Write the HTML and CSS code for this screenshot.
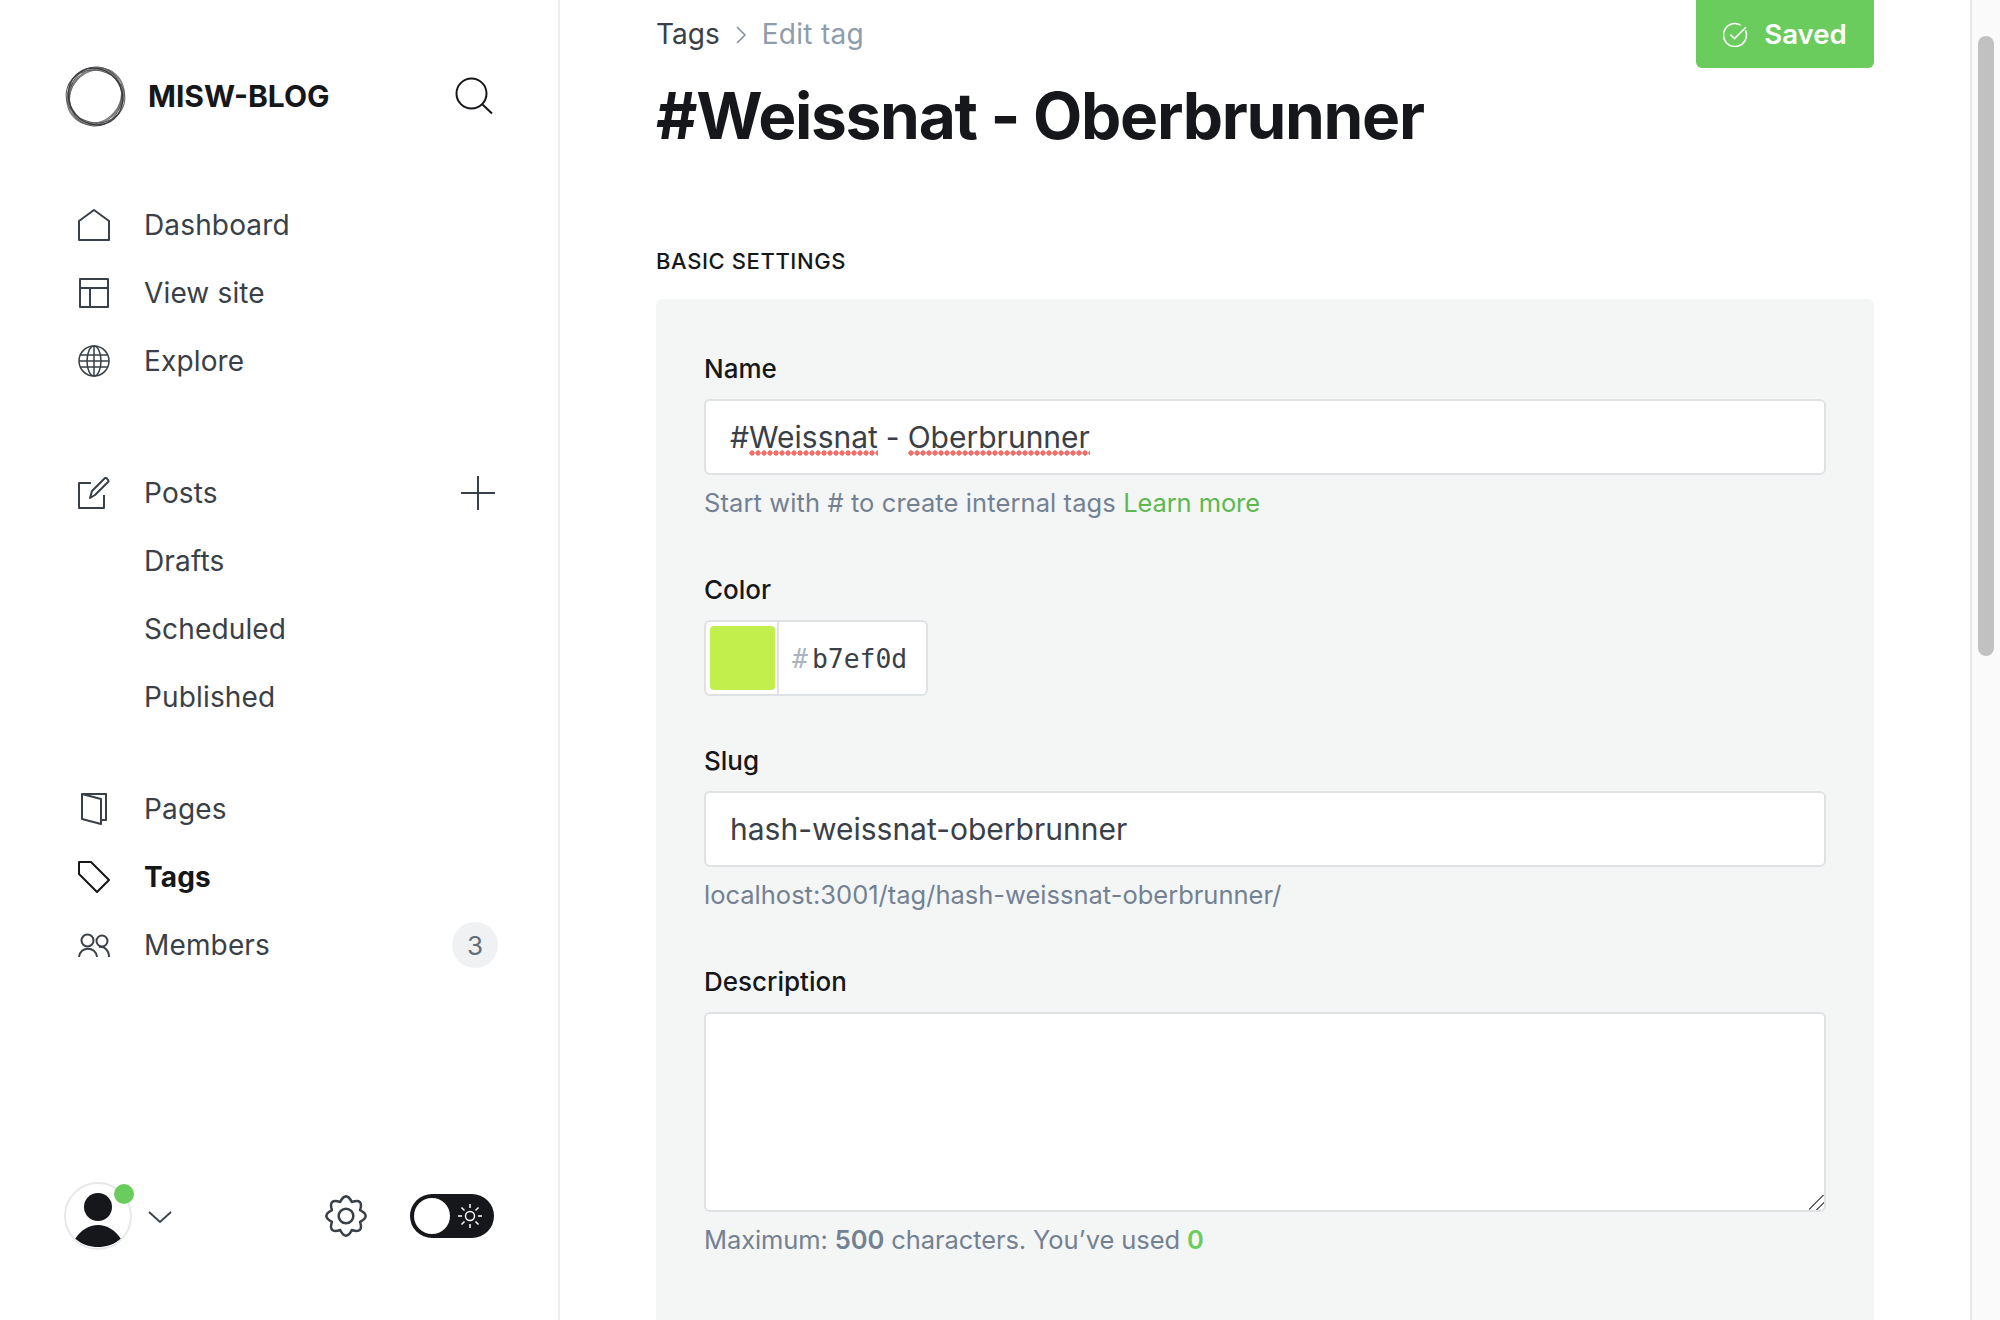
FILE: index.html
```html
<!DOCTYPE html>
<html>
<head>
    <meta charset="UTF-8">
    <title>Edit tag</title>
    <link rel="stylesheet" href="styles.css">
</head>
<body>
<aside class="sidebar">
    <div class="brand">
        <svg class="logo" viewBox="0 0 62 62" fill="none" stroke="#3a3c40" stroke-width="1">
            <ellipse cx="31" cy="31" rx="30.500" ry="25" stroke="#666" transform="rotate(-50 31 31)"/>
            <ellipse cx="31" cy="31" rx="30.500" ry="25.500" stroke="#777" transform="rotate(-38 31 31)"/>
            <ellipse cx="31" cy="31" rx="30" ry="26" stroke="#888" transform="rotate(-25 31 31)"/>
            <ellipse cx="31" cy="31" rx="30" ry="25.500" stroke="#777" transform="rotate(-65 31 31)"/>
            <ellipse cx="31" cy="31" rx="30" ry="26.500" stroke="#555" transform="rotate(15 31 31)"/>
            <ellipse cx="31" cy="31" rx="30" ry="26.500" stroke="#555" transform="rotate(95 31 31)"/>
            <ellipse cx="31" cy="31" rx="29.500" ry="27" stroke-width="1.500" transform="rotate(60 31 31)"/>
        </svg>
        <span class="brand-name">MISW-BLOG</span>
        <svg class="search" viewBox="0 0 38 38" fill="none" stroke="#15171a" stroke-width="2">
            <circle cx="16.500" cy="16.500" r="15"/>
            <path d="M27.500 27.500 L37 36.500"/>
        </svg>
    </div>

    <nav class="nav-group">
        <a class="nav-item">
            <svg class="nav-icon" viewBox="0 0 32 32"><path d="M1 31V12L16 1l15 11v19z"/></svg>
            Dashboard
        </a>
        <a class="nav-item">
            <svg class="nav-icon" viewBox="0 0 32 32"><path d="M2 2h28v28H2z M2 11h28 M12 11v19"/></svg>
            View site
        </a>
        <a class="nav-item">
            <svg class="nav-icon thin" viewBox="0 0 32 32"><circle cx="16" cy="16" r="15"/><ellipse cx="16" cy="16" rx="7" ry="15"/><path d="M16 1v30 M2.500 10h27 M1 16h30 M2.500 22h27"/></svg>
            Explore
        </a>
    </nav>

    <nav class="nav-group nav-group-posts">
        <a class="nav-item">
            <svg class="nav-icon" viewBox="0 0 32 32"><path d="M13 6H1v25h25V18 M12 21l2-7L27 1c1-.7 3.500 1.500 3.500 3.500L17 18z"/></svg>
            Posts
            <svg class="plus" viewBox="0 0 34 34"><path d="M17 0v34 M0 17h34"/></svg>
        </a>
        <a class="nav-item">Drafts</a>
        <a class="nav-item">Scheduled</a>
        <a class="nav-item">Published</a>
    </nav>

    <nav class="nav-group">
        <a class="nav-item">
            <svg class="nav-icon" viewBox="0 0 32 32"><path d="M4 1h24v26h-5 M4 1v25l19 5V6z"/></svg>
            Pages
        </a>
        <a class="nav-item active">
            <svg class="nav-icon" viewBox="0 0 32 32"><path d="M1 1h12l18 18-12 12L1 13z"/></svg>
            Tags
        </a>
        <a class="nav-item">
            <svg class="nav-icon" viewBox="0 0 32 32"><circle cx="9.500" cy="11.500" r="6"/><circle cx="24" cy="12" r="5.500"/><path d="M1 28c1-11 17-11 18 0 M21 18c5-1 10 3 10 10"/></svg>
            Members
            <span class="badge">3</span>
        </a>
    </nav>

    <div class="sidebar-footer">
        <div class="avatar">
            <svg viewBox="0 0 64 64"><circle cx="32" cy="23" r="14" fill="#15171a"/><path d="M9 55C15 46 23 41 32 41s17 5 23 14C47 61 40 63 32 63s-15-2-23-8z" fill="#15171a"/></svg>
            <span class="status-dot"></span>
        </div>
        <svg class="chevron" viewBox="0 0 24 12" fill="none" stroke="#394047" stroke-width="1.800"><path d="M1 1l11 10L23 1"/></svg>
        <svg class="gear" viewBox="0 0 40 40" fill="none" stroke="#394047" stroke-width="2.400">
            <circle cx="20" cy="20" r="7"/>
            <path d="M33.400 25.550Q37 37 25.550 33.400Q20 44 14.450 33.400Q3 37 6.600 25.550Q-4 20 6.600 14.450Q3 3 14.450 6.600Q20 -4 25.550 6.600Q37 3 33.400 14.450Q44 20 33.400 25.550z" stroke-linejoin="round"/>
        </svg>
        <div class="theme-toggle">
            <span class="toggle-knob"></span>
            <svg class="sun" viewBox="0 0 24 24" fill="none" stroke="#fff" stroke-width="1.500"><circle cx="12" cy="12" r="4.500"/><path d="M12 0v4 M12 20v4 M0 12h4 M20 12h4 M3.500 3.500l3 3 M17.500 17.500l3 3 M3.500 20.500l3-3 M17.500 6.500l3-3"/></svg>
        </div>
    </div>
</aside>

<main class="content">
    <header class="page-header">
        <div class="breadcrumb">
            <span class="crumb-link">Tags</span>
            <svg class="crumb-sep" viewBox="0 0 10 18" fill="none" stroke="#7c8b9a" stroke-width="1.500"><path d="M1 1l8 8-8 8"/></svg>
            <span class="crumb-current">Edit tag</span>
        </div>
        <button class="saved-btn">
            <svg viewBox="0 0 24 24" fill="none" stroke="#fff" stroke-width="1.500"><path d="M21.500 8A11 11 0 1 1 17 3"/><path d="M7 12l4 4 11-11"/></svg>
            Saved
        </button>
    </header>
    <h1 class="page-title">#Weissnat - Oberbrunner</h1>

    <h4 class="section-title">BASIC SETTINGS</h4>
    <form class="panel">
        <div class="field">
            <label>Name</label>
            <div class="input"><span>#<span class="misspelt">Weissnat</span></span> - <span class="misspelt">Oberbrunner</span></div>
            <p class="hint hint-wide">Start with # to create internal tags <a class="green">Learn more</a></p>
        </div>
        <div class="field field-color">
            <label>Color</label>
            <div class="color-input">
                <span class="swatch-cell"><span class="swatch"></span></span>
                <span class="hex"><span class="hash">#</span>b7ef0d</span>
            </div>
        </div>
        <div class="field">
            <label>Slug</label>
            <div class="input">hash-weissnat-oberbrunner</div>
            <p class="hint">localhost:3001/tag/hash-weissnat-oberbrunner/</p>
        </div>
        <div class="field">
            <label>Description</label>
            <textarea class="textarea"></textarea>
            <p class="hint hint-tight">Maximum: <b>500</b> characters. You’ve used <b class="count">0</b></p>
        </div>
    </form>
</main>

<div class="scrollbar"><div class="scroll-thumb"></div></div>
</body>
</html>
```

FILE: styles.css
```css
* {
    box-sizing: border-box;
}
html, body {
    height: 100%;
    margin: 0;
    overflow: hidden;
}
body {
    display: flex;
    font-family: Inter, "Liberation Sans", sans-serif;
    color: #15171a;
    background-color: #fff;
}

/* sidebar */
.sidebar {
    width: 560px;
    height: 1320px;
    flex-shrink: 0;
    display: flex;
    flex-direction: column;
    padding: 66px 60px 0 65px;
    border-right: 2px solid #eceef0;
}
.brand {
    display: flex;
    align-items: center;
    height: 60px;
    margin-bottom: 65px;
}
.logo {
    width: 61px;
    height: 61px;
}
.brand-name {
    margin-left: 22px;
    font-size: 30px;
    font-weight: 700;
}
.search {
    width: 38px;
    height: 38px;
    margin-left: auto;
    margin-right: 5px;
}
.nav-group {
    display: flex;
    flex-direction: column;
    margin-bottom: 64px;
}
.nav-group-posts {
    margin-bottom: 44px;
}
.nav-item {
    position: relative;
    display: flex;
    align-items: center;
    height: 68px;
    padding-left: 79px;
    font-size: 28px;
    letter-spacing: 0.15px;
    color: #394047;
}
.nav-item.active {
    font-weight: 700;
    color: #15171a;
}
.nav-icon {
    position: absolute;
    left: 13px;
    width: 32px;
    height: 32px;
    fill: none;
    stroke: #394047;
    stroke-width: 2;
    stroke-linejoin: round;
}
.nav-icon.thin {
    stroke-width: 1.500;
}
.active .nav-icon {
    stroke: #15171a;
}
.plus {
    width: 34px;
    height: 34px;
    margin-left: auto;
    margin-right: 3px;
    fill: none;
    stroke: #394047;
    stroke-width: 2;
}
.badge {
    display: flex;
    align-items: center;
    justify-content: center;
    width: 46px;
    height: 46px;
    margin-left: auto;
    border-radius: 50%;
    font-size: 26px;
    color: #626d79;
    background-color: #eff1f3;
}
.sidebar-footer {
    display: flex;
    align-items: center;
    margin-top: auto;
    margin-bottom: 70px;
    margin-left: -1px;
    padding-right: 4px;
}
.avatar {
    position: relative;
    width: 68px;
    height: 68px;
    border: 2px solid #e6e9eb;
    border-radius: 50%;
}
.avatar svg {
    display: block;
    width: 64px;
    height: 64px;
    border-radius: 50%;
}
.status-dot {
    position: absolute;
    top: 0;
    right: -4px;
    width: 20px;
    height: 20px;
    border-radius: 50%;
    background-color: #6acc5c;
}
.chevron {
    width: 24px;
    height: 12px;
    margin-left: 16px;
    margin-top: 2px;
}
.gear {
    width: 42px;
    height: 42px;
    margin-left: auto;
}
.theme-toggle {
    display: flex;
    align-items: center;
    justify-content: space-between;
    width: 84px;
    height: 44px;
    margin-left: 43px;
    padding: 0 12px 0 4px;
    border-radius: 22px;
    background-color: #15171a;
}
.toggle-knob {
    width: 36px;
    height: 36px;
    border-radius: 50%;
    background-color: #fff;
}
.sun {
    width: 24px;
    height: 24px;
}

/* main column */
.content {
    flex: 1;
    height: 1320px;
    padding: 0 96px;
    overflow: hidden;
}
.page-header {
    display: flex;
    justify-content: space-between;
    align-items: flex-start;
    height: 68px;
}
.breadcrumb {
    display: flex;
    align-items: center;
    gap: 16px;
    height: 68px;
    font-size: 28px;
}
.crumb-link {
    color: #394047;
}
.crumb-current {
    letter-spacing: 0.3px;
    color: #8e9cac;
}
.crumb-sep {
    width: 10px;
    height: 18px;
    margin-top: 2px;
}
.saved-btn {
    display: flex;
    align-items: center;
    justify-content: center;
    gap: 16px;
    width: 178px;
    height: 68px;
    padding: 0;
    border: none;
    border-radius: 0 0 6px 6px;
    font-family: inherit;
    font-size: 27.600px;
    font-weight: 600;
    color: #fff;
    background-color: #6acc5c;
}
.saved-btn svg {
    width: 25px;
    height: 25px;
}
.page-title {
    margin: 0;
    height: 96px;
    font-size: 64px;
    line-height: 96px;
    font-weight: 700;
    letter-spacing: -1.300px;
}
.section-title {
    margin: 83px 0 24px;
    font-size: 22px;
    line-height: 28px;
    font-weight: 500;
    letter-spacing: 0.6px;
}
.panel {
    height: 1100px;
    padding: 54px 48px 48px;
    border-radius: 6px;
    background-color: #f4f6f6;
}
.field {
    margin-bottom: 55px;
}
.field-color {
    margin-bottom: 49px;
}
.field label {
    display: block;
    margin-bottom: 14px;
    font-size: 26px;
    line-height: 32px;
    font-weight: 500;
}
.input {
    display: flex;
    align-items: center;
    gap: 8px;
    height: 76px;
    padding: 0 24px;
    border: 2px solid #dfe2e4;
    border-radius: 6px;
    font-size: 30px;
    color: #394047;
    background-color: #fff;
}
.misspelt {
    padding-bottom: 1px;
    background: radial-gradient(circle, #f1706a 2.4px, transparent 2.9px) 0 100% / 6px 6px repeat-x;
}
.hint {
    margin: 12px 0 0;
    font-size: 25.500px;
    line-height: 32px;
    color: #738192;
}
.hint-wide {
    letter-spacing: 0.1px;
}
.hint-tight {
    letter-spacing: -0.1px;
}
.green {
    letter-spacing: -0.1px;
    color: #5cb84f;
}
.hint b {
    font-weight: 600;
}
.hint .count {
    color: #6acc5c;
}
.color-input {
    display: flex;
    width: 224px;
    height: 76px;
    border: 2px solid #dfe2e4;
    border-radius: 6px;
    background-color: #fff;
}
.swatch-cell {
    width: 73px;
    padding: 4px;
    border-right: 2px solid #dfe2e4;
}
.swatch {
    display: block;
    width: 65px;
    height: 64px;
    border-radius: 4px;
    background-color: #c3ef4d;
}
.hex {
    display: flex;
    align-items: center;
    padding-left: 13px;
    font-family: "DejaVu Sans Mono", "Liberation Mono", monospace;
    font-size: 26.400px;
    color: #394047;
}
.hash {
    margin-right: 4px;
    color: #abb4be;
}
.textarea {
    display: block;
    width: 100%;
    height: 200px;
    border: 2px solid #dfe2e4;
    border-radius: 6px;
    background-color: #fff;
    outline: none;
}
.textarea::-webkit-resizer {
    background: linear-gradient(135deg, transparent 0 46%, #666 46% 53%, transparent 53% 72%, #666 72% 79%, transparent 79%);
}

/* fake window scrollbar */
.scrollbar {
    width: 30px;
    height: 1320px;
    flex-shrink: 0;
    padding: 36px 6px 0 6px;
    border-left: 2px solid #e8e8e8;
    background-color: #fafafa;
}
.scroll-thumb {
    width: 16px;
    height: 620px;
    border-radius: 8px;
    background-color: #c1c1c1;
}
```
